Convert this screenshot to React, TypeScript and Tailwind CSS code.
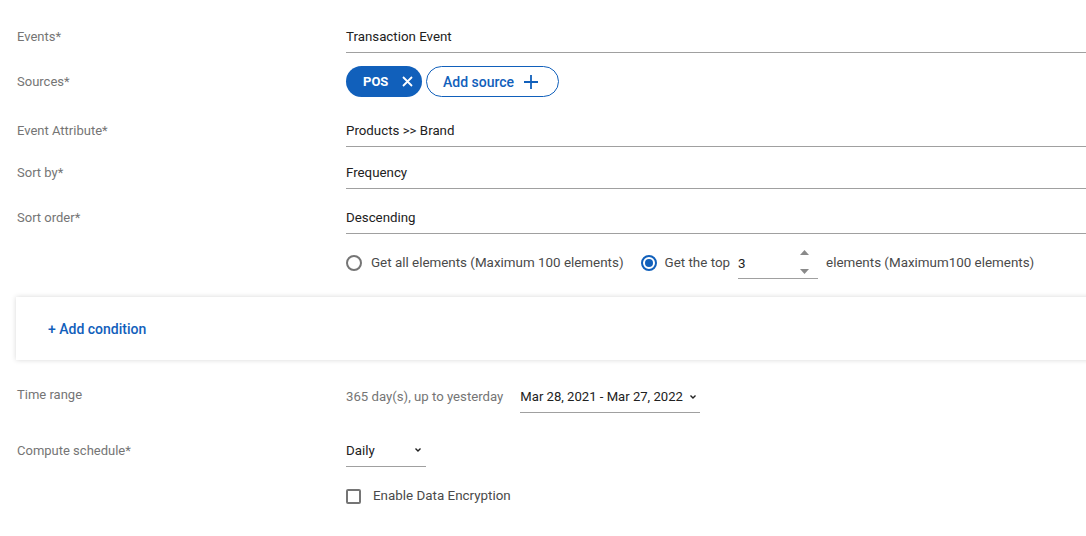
import React from "react";

const Label = ({ children, className = "" }: { children: React.ReactNode; className?: string }) => (
  <div className={`w-[329px] shrink-0 text-[13px] leading-[16px] text-[#757575] ${className}`}>{children}</div>
);

const UnderlineField = ({ value }: { value: string }) => (
  <div className="flex-1 h-[30px] border-b border-[#a0a0a0] pt-[6px] text-[13.3px] leading-[16px] text-[#212121]">
    {value}
  </div>
);

const Chevron = () => (
  <svg width="10" height="10" viewBox="0 0 10 10" className="text-[#212121]">
    <path d="M2.5 3.5 L5 6 L7.5 3.5" fill="none" stroke="currentColor" strokeWidth="1.4" />
  </svg>
);

export default function App() {
  return (
    <div
      className="w-[1086px] h-[536px] overflow-hidden bg-white"
      style={{ fontFamily: "Roboto, 'Noto Sans', sans-serif" }}
    >
      <div className="flex flex-col">
        {/* Events */}
        <div className="flex pl-[17px] mt-[23px]">
          <Label className="pt-[6px]">Events*</Label>
          <UnderlineField value="Transaction Event" />
        </div>

        {/* Sources */}
        <div className="flex items-center pl-[17px] mt-[13px] h-[31px]">
          <Label>Sources*</Label>
          <div className="flex items-center gap-[4px]">
            <div className="flex items-center h-[31px] w-[76px] rounded-full bg-[#1160bb] pl-[17px] text-white">
              <span className="text-[13px] font-bold leading-[16px]">POS</span>
              <svg width="11" height="11" viewBox="0 0 11 11" className="ml-[14px]">
                <path d="M1 1 L10 10 M10 1 L1 10" stroke="white" strokeWidth="1.8" />
              </svg>
            </div>
            <div className="flex items-center h-[31px] w-[133px] rounded-full border border-[#1160bb] pl-[16px] text-[#1160bb]">
              <span className="text-[14px] font-medium leading-[16px]">Add source</span>
              <svg width="16" height="16" viewBox="0 0 16 16" className="ml-[9px]">
                <path d="M8 1 V15 M1 8 H15" stroke="#1160bb" strokeWidth="1.8" />
              </svg>
            </div>
          </div>
        </div>

        {/* Event Attribute */}
        <div className="flex pl-[17px] mt-[20px]">
          <Label className="pt-[6px]">Event Attribute*</Label>
          <UnderlineField value="Products >> Brand" />
        </div>

        {/* Sort by */}
        <div className="flex pl-[17px] mt-[12px]">
          <Label className="pt-[6px]">Sort by*</Label>
          <UnderlineField value="Frequency" />
        </div>

        {/* Sort order */}
        <div className="flex pl-[17px] mt-[15px]">
          <Label className="pt-[6px]">Sort order*</Label>
          <UnderlineField value="Descending" />
        </div>

        {/* Radio row */}
        <div className="flex items-center pl-[346px] mt-[14px] h-[31px] text-[13.4px] leading-[16px] text-[#4a4a4a]">
          <span className="w-[16px] h-[16px] rounded-full border-2 border-[#757575] shrink-0 mt-[-1px]" />
          <span className="ml-[9px] mt-[-1px]">Get all elements (Maximum 100 elements)</span>
          <span className="ml-[17px] mt-[-1px] w-[16px] h-[16px] rounded-full border-2 border-[#1160bb] shrink-0 flex items-center justify-center">
            <span className="w-[8px] h-[8px] rounded-full bg-[#1160bb]" />
          </span>
          <span className="ml-[8px] mt-[-1px]">Get the top</span>
          <div className="ml-[8px] w-[80px] h-[31px] border-b border-[#a0a0a0] flex items-center justify-between">
            <span className="text-[#212121] pt-[1px]">3</span>
            <div className="flex flex-col items-center justify-between h-[24px] mr-[9px] mt-[-2px]">
              <svg width="9" height="5" viewBox="0 0 9 5"><path d="M0 5 L4.5 0 L9 5 Z" fill="#8a8a8a" /></svg>
              <svg width="9" height="5" viewBox="0 0 9 5"><path d="M0 0 L4.5 5 L9 0 Z" fill="#8a8a8a" /></svg>
            </div>
          </div>
          <span className="ml-[8px] mt-[-1px]">elements (Maximum100 elements)</span>
        </div>

        {/* Card */}
        <div className="mt-[18px] ml-[16px] w-[1090px] h-[63px] bg-white shadow-[0_0_5px_rgba(0,0,0,0.16)] flex items-center pl-[32px]">
          <span className="text-[14px] font-medium leading-[16px] text-[#1160bb]">+ Add condition</span>
        </div>

        {/* Time range */}
        <div className="flex pl-[17px] mt-[23px]">
          <Label className="pt-[4px]">Time range</Label>
          <span className="pt-[6px] text-[13.2px] leading-[16px] text-[#757575]">365 day(s), up to yesterday</span>
          <div className="ml-[17px] w-[180px] h-[30px] border-b border-[#a0a0a0] pt-[6px] flex justify-between text-[13.1px] leading-[16px] text-[#212121]">
            <span>Mar 28, 2021 - Mar 27, 2022</span>
            <span className="mr-[2px] mt-[3px]"><Chevron /></span>
          </div>
        </div>

        {/* Compute schedule */}
        <div className="flex pl-[17px] mt-[24px]">
          <Label className="pt-[6px]">Compute schedule*</Label>
          <div className="w-[80px] h-[30px] border-b border-[#a0a0a0] pt-[6px] flex justify-between text-[13.3px] leading-[16px] text-[#212121]">
            <span>Daily</span>
            <span className="mr-[3px] mt-[2px]"><Chevron /></span>
          </div>
        </div>

        {/* Checkbox */}
        <div className="flex items-center pl-[346px] mt-[21px] h-[16px]">
          <span className="w-[15px] h-[15px] border-2 border-[#757575] rounded-[2px]" />
          <span className="ml-[12px] text-[13.4px] leading-[16px] text-[#4a4a4a]">Enable Data Encryption</span>
        </div>
      </div>
    </div>
  );
}
